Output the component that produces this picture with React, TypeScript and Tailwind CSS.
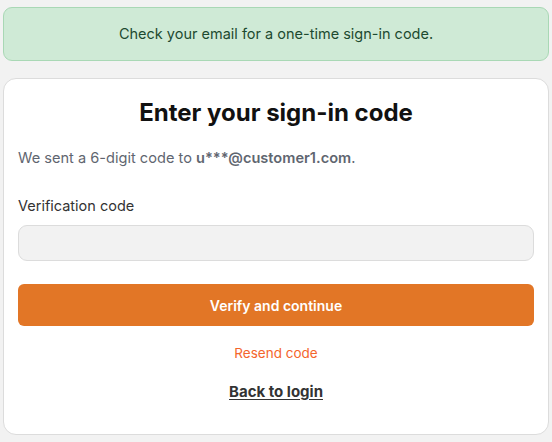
export default function App() {
  return (
    <div
      className="min-h-[442px] w-full bg-[#f2f2f2] px-[3px] pt-[7px]"
      style={{ fontFamily: 'Inter, "Noto Sans", sans-serif' }}
    >
      {/* Notice banner */}
      <div className="flex h-[54px] items-center justify-center rounded-[9px] border border-[#a9d8b5] bg-[#cfead6] text-[14.5px] text-[#1d4a30]">
        Check your email for a one-time sign-in code.
      </div>

      {/* Card */}
      <div className="mt-[17px] rounded-[13px] border border-[#dcdcdc] bg-white px-[14px] pb-[31px] pt-[18px]">
        <h1 className="text-center text-[24px] font-bold leading-[32px] text-[#111]">
          Enter your sign-in code
        </h1>
        <p className="mt-[18px] text-[14.6px] leading-[22px] text-[#5f6670]">
          We sent a 6-digit code to <span className="font-semibold">u***@customer1.com</span>.
        </p>

        <label className="mt-[26px] block text-[14.5px] leading-[22px] text-[#333]">Verification code</label>
        <input
          type="text"
          className="mt-[8px] block h-[36px] w-full rounded-[9px] border border-[#dcdcdc] bg-[#f2f2f2] px-3 outline-none"
        />

        <button className="mt-[23px] flex h-[42px] w-full items-center justify-center rounded-[6px] bg-[#e27626] text-[14px] font-semibold text-white">
          Verify and continue
        </button>

        <div className="mt-[17px] text-center text-[13.5px] leading-[20px] text-[#f4652c]">Resend code</div>
        <div className="mt-[18px] text-center text-[15px] font-bold leading-[22px] text-[#333] underline underline-offset-2">
          Back to login
        </div>
      </div>
    </div>
  );
}
